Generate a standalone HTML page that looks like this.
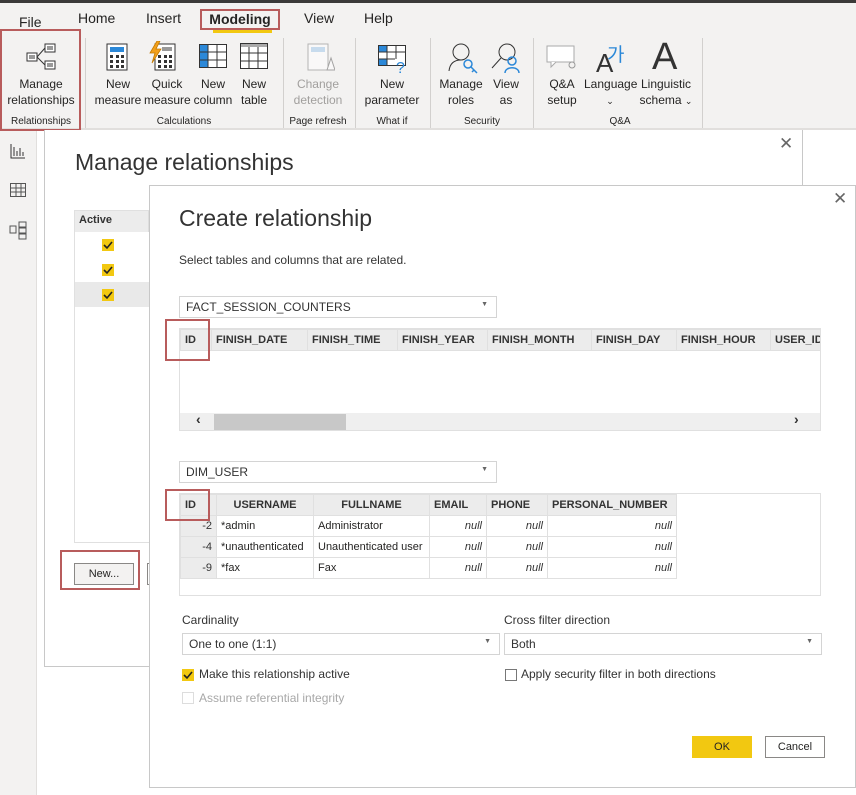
<!DOCTYPE html>
<html><head><meta charset="utf-8"><style>
*{box-sizing:border-box;margin:0;padding:0}
body{width:856px;height:795px;overflow:hidden;background:#fff;font-family:"Segoe UI","Liberation Sans",sans-serif;color:#252423;position:relative;font-size:12px}
.abs{position:absolute}
.rib{left:0;top:0;width:856px;height:130px;background:#f3f2f1;border-bottom:2px solid #e1dfdd}
.topbar{left:0;top:0;width:856px;height:3px;background:#3b3a39}
.tab{top:10px;font-size:14px;color:#252423}
.btn{text-align:center;font-size:12px;line-height:16px;color:#252423}
.grp{font-size:10px;color:#252423;top:116px;text-align:center}
.sep{top:38px;width:1px;height:90px;background:#d2d0ce}
.rb{border:2px solid #b85c5c}
.th{background:#ececec;font-weight:bold;font-size:11px;color:#333}
table{border-collapse:collapse;table-layout:fixed}
td{border:1px solid #e0e0e0;height:21px;padding:0 4px;font-size:11px;white-space:nowrap;overflow:hidden}
.num{text-align:right;font-style:italic;color:#333}
.sel{border:1px solid #d4d4d4;background:#fff;height:22px;font-size:12px;padding:3px 6px;color:#333}
.arr{position:absolute;right:8px;top:4px;font-size:7px;color:#666}
.cb{width:12px;height:12px;background:#f2c811;display:block}
</style></head><body>
<div class="abs rib"></div><div class="abs topbar"></div>
<div class="abs tab" style="left:19px;top:14px">File</div>
<div class="abs tab" style="left:78px">Home</div>
<div class="abs tab" style="left:146px">Insert</div>
<div class="abs tab rb" style="left:200px;top:9px;width:80px;height:21px;font-weight:bold;text-align:center;line-height:17px">Modeling</div>
<div class="abs" style="left:213px;top:30px;width:59px;height:3px;background:#f2c811"></div>
<div class="abs tab" style="left:304px">View</div>
<div class="abs tab" style="left:364px">Help</div>

<div class="abs rb" style="left:0;top:29px;width:81px;height:102px"></div>
<svg class="abs" style="left:25px;top:42px" width="32" height="30" fill="#fff" stroke="#333"><rect x="2" y="11" width="10" height="8"/><rect x="20" y="2" width="10" height="8"/><rect x="20" y="19" width="10" height="8"/><path d="M12 15 L20 6 M12 15 L20 23 M4 14h6M4 16h6M22 5h6M22 7h6M22 22h6M22 24h6"/></svg>
<div class="abs btn" style="left:4px;top:76px;width:74px">Manage<br>relationships</div>
<div class="abs grp" style="left:4px;width:74px">Relationships</div>
<div class="abs sep" style="left:85px"></div>

<svg class="abs" style="left:106px;top:43px" width="22" height="28"><rect x="1" y="1" width="20" height="26" fill="#fff" stroke="#333"/><rect x="4" y="4" width="14" height="5" fill="#2b88d8"/><g fill="#333"><rect x="4" y="12" width="3" height="3"/><rect x="10" y="12" width="3" height="3"/><rect x="15" y="12" width="3" height="3"/><rect x="4" y="17" width="3" height="3"/><rect x="10" y="17" width="3" height="3"/><rect x="15" y="17" width="3" height="3"/><rect x="4" y="22" width="3" height="3"/><rect x="10" y="22" width="3" height="3"/><rect x="15" y="22" width="3" height="3"/></g></svg>
<div class="abs btn" style="left:94px;top:76px;width:48px">New<br>measure</div>
<svg class="abs" style="left:149px;top:41px" width="28" height="30"><rect x="6" y="3" width="20" height="26" fill="#fff" stroke="#333"/><rect x="13" y="6" width="10" height="4" fill="#999"/><g fill="#333"><rect x="9" y="14" width="3" height="3"/><rect x="15" y="14" width="3" height="3"/><rect x="20" y="14" width="3" height="3"/><rect x="9" y="19" width="3" height="3"/><rect x="15" y="19" width="3" height="3"/><rect x="20" y="19" width="3" height="3"/><rect x="9" y="24" width="3" height="3"/><rect x="15" y="24" width="3" height="3"/><rect x="20" y="24" width="3" height="3"/></g><path d="M8 0 L1 12 L6 12 L3 22 L12 8 L7 8 L11 0Z" fill="#f2a01c" stroke="#c47a00" stroke-width=".8"/></svg>
<div class="abs btn" style="left:144px;top:76px;width:46px">Quick<br>measure</div>
<svg class="abs" style="left:199px;top:44px" width="28" height="24"><rect x=".5" y=".5" width="27" height="23" fill="#fff" stroke="#333"/><rect x="1" y="1" width="8" height="22" fill="#2b88d8"/><path d="M1 8h27M1 16h27M9 1v23M18 1v23" stroke="#333" fill="none"/></svg>
<div class="abs btn" style="left:192px;top:76px;width:42px">New<br>column</div>
<svg class="abs" style="left:240px;top:43px" width="28" height="26"><rect x=".5" y=".5" width="27" height="25" fill="#fff" stroke="#333"/><rect x="1" y="1" width="26" height="3" fill="#aaa"/><path d="M1 10h27M1 18h27M9 4v22M18 4v22" stroke="#333" fill="none"/></svg>
<div class="abs btn" style="left:236px;top:76px;width:36px">New<br>table</div>
<div class="abs grp" style="left:92px;width:184px">Calculations</div>
<div class="abs sep" style="left:283px"></div>
<svg class="abs" style="left:307px;top:43px" width="28" height="30" opacity=".5"><rect x="1" y="1" width="20" height="26" fill="#fff" stroke="#777"/><rect x="4" y="4" width="14" height="5" fill="#9cc6ea"/><path d="M20 27 L24 15 L28 27Z" fill="#fff" stroke="#555"/></svg>
<div class="abs btn" style="left:286px;top:76px;width:64px;color:#a19f9d">Change<br>detection</div>
<div class="abs grp" style="left:286px;width:64px">Page refresh</div>
<div class="abs sep" style="left:355px"></div>
<svg class="abs" style="left:378px;top:45px" width="30" height="28"><rect x=".5" y=".5" width="27" height="20" fill="#fff" stroke="#333"/><rect x="1" y="1" width="8" height="6" fill="#2b88d8"/><rect x="1" y="14" width="8" height="6" fill="#2b88d8"/><path d="M1 7h27M1 14h16M9 1v20M18 1v13" stroke="#333" fill="none"/><text x="18" y="28" font-size="16" fill="#2b88d8" font-family="Liberation Sans">?</text></svg>
<div class="abs btn" style="left:360px;top:76px;width:64px">New<br>parameter</div>
<div class="abs grp" style="left:360px;width:64px">What if</div>
<div class="abs sep" style="left:430px"></div>
<svg class="abs" style="left:448px;top:42px" width="30" height="32" fill="none"><circle cx="13" cy="10" r="8" stroke="#333"/><path d="M1 29 C2 20 8 18 13 18" stroke="#333"/><circle cx="20" cy="22" r="4" stroke="#2b88d8" stroke-width="1.5"/><path d="M23 25 L29 31 M26 28 L24 30" stroke="#2b88d8" stroke-width="1.5"/></svg>
<div class="abs btn" style="left:437px;top:76px;width:48px">Manage<br>roles</div>
<svg class="abs" style="left:490px;top:42px" width="32" height="32" fill="none"><circle cx="17" cy="10" r="8" stroke="#333"/><path d="M11 16 L2 26" stroke="#333"/><circle cx="22" cy="19" r="4" stroke="#2b88d8" stroke-width="1.5"/><path d="M15 31 C15 24 29 24 29 31" stroke="#2b88d8" stroke-width="1.5"/></svg>
<div class="abs btn" style="left:490px;top:76px;width:32px">View<br>as</div>
<div class="abs grp" style="left:437px;width:90px">Security</div>
<div class="abs sep" style="left:533px"></div>
<svg class="abs" style="left:546px;top:45px" width="32" height="24" fill="none"><rect x="1" y="1" width="27" height="16" stroke="#aaa" fill="#fff"/><path d="M5 17 L5 22 L10 17" stroke="#aaa" fill="#fff"/><circle cx="26" cy="20" r="3" stroke="#999"/></svg>
<div class="abs btn" style="left:542px;top:76px;width:40px">Q&amp;A<br>setup</div>
<div class="abs" style="left:596px;top:48px;font-size:26px;color:#333;font-family:'Liberation Sans'">A</div>
<div class="abs" style="left:607px;top:40px;font-size:19px;color:#2b88d8;font-family:'Noto Sans CJK KR',sans-serif">가</div>
<div class="abs btn" style="left:584px;top:76px;width:52px">Language<br><span style="font-size:9px">⌄</span></div>
<div class="abs" style="left:652px;top:36px;font-size:38px;color:#333;font-family:'Liberation Sans';font-weight:300">A</div>
<div class="abs btn" style="left:639px;top:76px;width:54px">Linguistic<br>schema <span style="font-size:9px">⌄</span></div>
<div class="abs grp" style="left:540px;width:160px">Q&amp;A</div>
<div class="abs sep" style="left:702px"></div>

<!-- left rail -->
<div class="abs" style="left:0;top:131px;width:37px;height:664px;background:#f3f2f1;border-right:1px solid #e1dfdd"></div>
<svg class="abs" style="left:10px;top:143px" width="16" height="16" fill="none" stroke="#333"><path d="M1 1v14h14M4 4v9M7 8v5M10 5v8M13 9v4"/></svg>
<svg class="abs" style="left:10px;top:183px" width="16" height="15" fill="none" stroke="#555"><rect x=".5" y=".5" width="15" height="13"/><path d="M1 5h15M1 9h15M6 1v13M11 1v13"/></svg>
<svg class="abs" style="left:9px;top:221px" width="18" height="19" fill="none" stroke="#555"><rect x="1" y="5" width="6" height="7"/><rect x="10" y="1" width="7" height="5"/><rect x="10" y="7" width="7" height="5"/><rect x="10" y="13" width="7" height="5"/></svg>

<!-- manage relationships dialog -->
<div class="abs" style="left:802px;top:130px;width:1px;height:56px;background:#c8c8c8"></div>
<div class="abs" style="left:44px;top:130px;width:759px;height:537px;border:1px solid #c8c8c8;border-top:none;background:#fff"></div>
<div class="abs" style="left:75px;top:149px;font-size:23px;color:#333;font-weight:300">Manage relationships</div>
<div class="abs" style="left:779px;top:134px;font-size:17px;color:#666">✕</div>
<div class="abs" style="left:74px;top:210px;width:80px;height:333px;border:1px solid #e0e0e0"></div>
<div class="abs th" style="left:75px;top:211px;width:74px;height:21px;padding:3px 4px;border-right:1px solid #ddd">Active</div>
<div class="abs" style="left:75px;top:282px;width:74px;height:25px;background:#e9e9e9"></div>
<div class="abs cb" style="left:102px;top:239px"><svg width="12" height="12"><path d="M2 6l3 3 5-6" stroke="#222" stroke-width="1.6" fill="none"/></svg></div>
<div class="abs cb" style="left:102px;top:264px"><svg width="12" height="12"><path d="M2 6l3 3 5-6" stroke="#222" stroke-width="1.6" fill="none"/></svg></div>
<div class="abs cb" style="left:102px;top:289px"><svg width="12" height="12"><path d="M2 6l3 3 5-6" stroke="#222" stroke-width="1.6" fill="none"/></svg></div>
<div class="abs rb" style="left:60px;top:550px;width:80px;height:40px"></div>
<div class="abs" style="left:74px;top:563px;width:60px;height:22px;border:1px solid #8a8886;background:#f3f2f1;text-align:center;font-size:11px;line-height:20px">New...</div>
<div class="abs" style="left:147px;top:563px;width:5px;height:22px;border:1px solid #8a8886;border-right:none"></div>

<!-- create relationship dialog -->
<div class="abs" style="left:149px;top:185px;width:707px;height:603px;border:1px solid #c8c8c8;background:#fff"></div>
<div class="abs" style="left:833px;top:189px;font-size:17px;color:#666">✕</div>
<div class="abs" style="left:179px;top:205px;font-size:23px;color:#333;font-weight:300">Create relationship</div>
<div class="abs" style="left:179px;top:253px;font-size:12px;color:#333">Select tables and columns that are related.</div>

<div class="abs sel" style="left:179px;top:296px;width:318px">FACT_SESSION_COUNTERS<span class="arr">▼</span></div>
<div class="abs" style="left:179px;top:328px;width:642px;height:103px;border:1px solid #e0e0e0;overflow:hidden">
<table style="background:#ececec;width:690px"><colgroup><col style="width:31px"><col style="width:96px"><col style="width:90px"><col style="width:90px"><col style="width:104px"><col style="width:85px"><col style="width:94px"><col style="width:100px"></colgroup><tr class="th">
<td>ID</td><td>FINISH_DATE</td><td>FINISH_TIME</td><td>FINISH_YEAR</td><td>FINISH_MONTH</td><td>FINISH_DAY</td><td>FINISH_HOUR</td><td>USER_ID</td></tr></table>
<div class="abs" style="left:0;top:84px;width:642px;height:18px;background:#efefef"></div>
<div class="abs" style="left:34px;top:85px;width:132px;height:16px;background:#c8c8c8"></div>
<div class="abs" style="left:16px;top:82px;font-size:14px;color:#333;font-weight:bold">‹</div>
<div class="abs" style="left:614px;top:82px;font-size:14px;color:#333;font-weight:bold">›</div>
</div>
<div class="abs rb" style="left:165px;top:319px;width:45px;height:42px"></div>

<div class="abs sel" style="left:179px;top:461px;width:318px">DIM_USER<span class="arr">▼</span></div>
<div class="abs" style="left:179px;top:493px;width:642px;height:103px;border:1px solid #e0e0e0;overflow:hidden">
<table style="width:496px"><colgroup><col style="width:36px"><col style="width:97px"><col style="width:116px"><col style="width:57px"><col style="width:61px"><col style="width:129px"></colgroup><tr class="th">
<td>ID</td><td style="text-align:center">USERNAME</td><td style="text-align:center">FULLNAME</td><td>EMAIL</td><td>PHONE</td><td>PERSONAL_NUMBER</td></tr>
<tr><td class="th" style="text-align:right;font-weight:normal">-2</td><td>*admin</td><td>Administrator</td><td class="num">null</td><td class="num">null</td><td class="num">null</td></tr>
<tr><td class="th" style="text-align:right;font-weight:normal">-4</td><td>*unauthenticated</td><td>Unauthenticated user</td><td class="num">null</td><td class="num">null</td><td class="num">null</td></tr>
<tr><td class="th" style="text-align:right;font-weight:normal">-9</td><td>*fax</td><td>Fax</td><td class="num">null</td><td class="num">null</td><td class="num">null</td></tr></table>
</div>
<div class="abs rb" style="left:165px;top:489px;width:45px;height:32px"></div>

<div class="abs" style="left:182px;top:613px;font-size:12px;color:#333">Cardinality</div>
<div class="abs sel" style="left:182px;top:633px;width:318px">One to one (1:1)<span class="arr">▼</span></div>
<div class="abs" style="left:504px;top:613px;font-size:12px;color:#333">Cross filter direction</div>
<div class="abs sel" style="left:504px;top:633px;width:318px">Both<span class="arr">▼</span></div>
<div class="abs cb" style="left:182px;top:669px"><svg width="12" height="12"><path d="M2 6l3 3 5-6" stroke="#222" stroke-width="1.6" fill="none"/></svg></div>
<div class="abs" style="left:199px;top:667px;font-size:12px;color:#333">Make this relationship active</div>
<div class="abs" style="left:182px;top:692px;width:12px;height:12px;border:1px solid #ddd"></div>
<div class="abs" style="left:199px;top:691px;font-size:12px;color:#a8a8a8">Assume referential integrity</div>
<div class="abs" style="left:505px;top:669px;width:12px;height:12px;border:1px solid #777"></div>
<div class="abs" style="left:521px;top:667px;font-size:12px;color:#333">Apply security filter in both directions</div>
<div class="abs" style="left:692px;top:736px;width:60px;height:22px;background:#f2c811;text-align:center;line-height:22px;font-size:11px">OK</div>
<div class="abs" style="left:765px;top:736px;width:60px;height:22px;border:1px solid #8a8886;text-align:center;line-height:20px;font-size:11px">Cancel</div>
</body></html>
